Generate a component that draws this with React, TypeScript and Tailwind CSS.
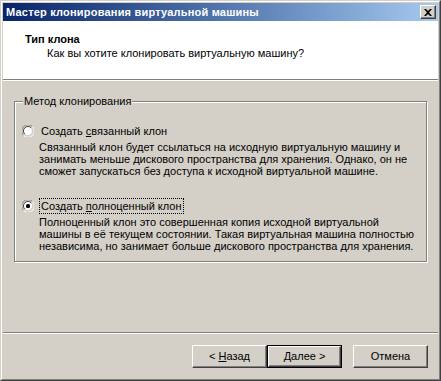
import type { ReactNode } from 'react';

const font = { fontFamily: '"Liberation Sans", Arial, sans-serif' };

function Radio({ checked }: { checked?: boolean }) {
  return (
    <svg width="12" height="12" viewBox="0 0 12 12" className="shrink-0">
      {/* etched circle: outer gray/white, inner dark/face */}
      <path d="M1.5 10.5 A6 6 0 0 1 10.5 1.5" stroke="#808080" strokeWidth="1" fill="none" />
      <path d="M10.5 1.5 A6 6 0 0 1 1.5 10.5" stroke="#ffffff" strokeWidth="1" fill="none" />
      <circle cx="6" cy="6" r="4.5" fill="#ffffff" />
      <path d="M2.8 9.2 A4.5 4.5 0 0 1 9.2 2.8" stroke="#404040" strokeWidth="1" fill="none" />
      <path d="M9.2 2.8 A4.5 4.5 0 0 1 2.8 9.2" stroke="#d4d0c8" strokeWidth="1" fill="none" />
      {checked && <rect x="4" y="4" width="4" height="4" rx="1.5" fill="#000000" />}
    </svg>
  );
}

function Option({ checked, label, desc, focus }: { checked?: boolean; label: ReactNode; desc: string[]; focus?: boolean }) {
  return (
    <div className="flex flex-col">
      <div className="flex h-[12px] items-center gap-[6px]">
        <Radio checked={checked} />
        <span className={`px-px leading-[14px] ${focus ? 'outline-1 outline-dotted outline-black' : ''}`}>{label}</span>
      </div>
      <div className="mt-[4px] pl-[17px] leading-[12px]">
        {desc.map((l) => (
          <div key={l}>{l}</div>
        ))}
      </div>
    </div>
  );
}

function Button({ children, isDefault }: { children: ReactNode; isDefault?: boolean }) {
  return (
    <div className={`h-[23px] w-[75px] ${isDefault ? 'border border-black' : ''}`}>
      <button className="flex h-full w-full items-center justify-center border border-t-white border-l-white border-r-[#404040] border-b-[#404040] bg-[#d4d0c8] text-[11px] shadow-[inset_-1px_-1px_0_#808080]">
        <span className="whitespace-pre">{children}</span>
      </button>
    </div>
  );
}

export default function App() {
  return (
    <div style={font} className="h-[381px] w-[441px] border border-t-[#d4d0c8] border-l-[#d4d0c8] border-r-[#404040] border-b-[#404040] text-[11px] text-black">
      <div className="flex h-full flex-col border border-t-white border-l-white border-r-[#808080] border-b-[#808080] bg-[#d4d0c8] p-px">
        {/* Title bar */}
        <div className="flex h-[18px] shrink-0 items-center justify-between bg-gradient-to-r from-[#0a246a] to-[#a6caf0] pl-[3px] pr-[2px]">
          <span className="text-[11px] font-bold tracking-[0.2px] text-white">Мастер клонирования виртуальной машины</span>
          <div className="flex h-[14px] w-[16px] items-center justify-center border border-t-white border-l-white border-r-[#404040] border-b-[#404040] bg-[#d4d0c8] shadow-[inset_-1px_-1px_0_#808080]">
            <svg width="8" height="7" viewBox="0 0 8 7">
              <path d="M0 0h2l2 2 2-2h2L5 3.5 8 7H6L4 5 2 7H0l3-3.5z" fill="#000" />
            </svg>
          </div>
        </div>

        {/* Header */}
        <div className="h-[59px] shrink-0 border-b border-b-[#808080] bg-white pl-[22px] pt-[12px] shadow-[0_1px_0_#ffffff]">
          <div className="font-bold leading-[13px]">Тип клона</div>
          <div className="mt-px pl-[22px] leading-[13px]">Как вы хотите клонировать виртуальную машину?</div>
        </div>

        {/* Body */}
        <div className="flex flex-1 flex-col pt-[15px]">
          <fieldset className="mx-[11px] h-[167px] border border-[#808080] px-[7px] shadow-[inset_1px_1px_0_#ffffff,1px_1px_0_#ffffff]">
            <legend className="ml-px bg-[#d4d0c8] px-px leading-[13px]">Метод клонирования</legend>
            <div className="mt-[17px] flex flex-col gap-[23px]">
              <Option
                label={<>Создать <u>с</u>вязанный клон</>}
                desc={[
                  'Связанный клон будет ссылаться на исходную виртуальную машину и',
                  'занимать меньше дискового пространства для хранения. Однако, он не',
                  'сможет запускаться без доступа к исходной виртуальной машине.',
                ]}
              />
              <Option
                checked
                focus
                label={<>Создать <u>п</u>олноценный клон</>}
                desc={[
                  'Полноценный клон это совершенная копия исходной виртуальной',
                  'машины в её текущем состоянии. Такая виртуальная машина полностью',
                  'независима, но занимает больше дискового пространства для хранения.',
                ]}
              />
            </div>
          </fieldset>

          <div className="flex-1" />
          <div className="h-[2px] border-t border-t-[#808080] border-b border-b-white" />
          <div className="flex h-[44px] items-start justify-end gap-[11px] pr-[10px] pt-[11px]">
            <div className="flex">
              <Button>
                {'< '}<u>Н</u>азад
              </Button>
              <Button isDefault>
                <u>Д</u>алее {'>'}
              </Button>
            </div>
            <Button>Отмена</Button>
          </div>
        </div>
      </div>
    </div>
  );
}
